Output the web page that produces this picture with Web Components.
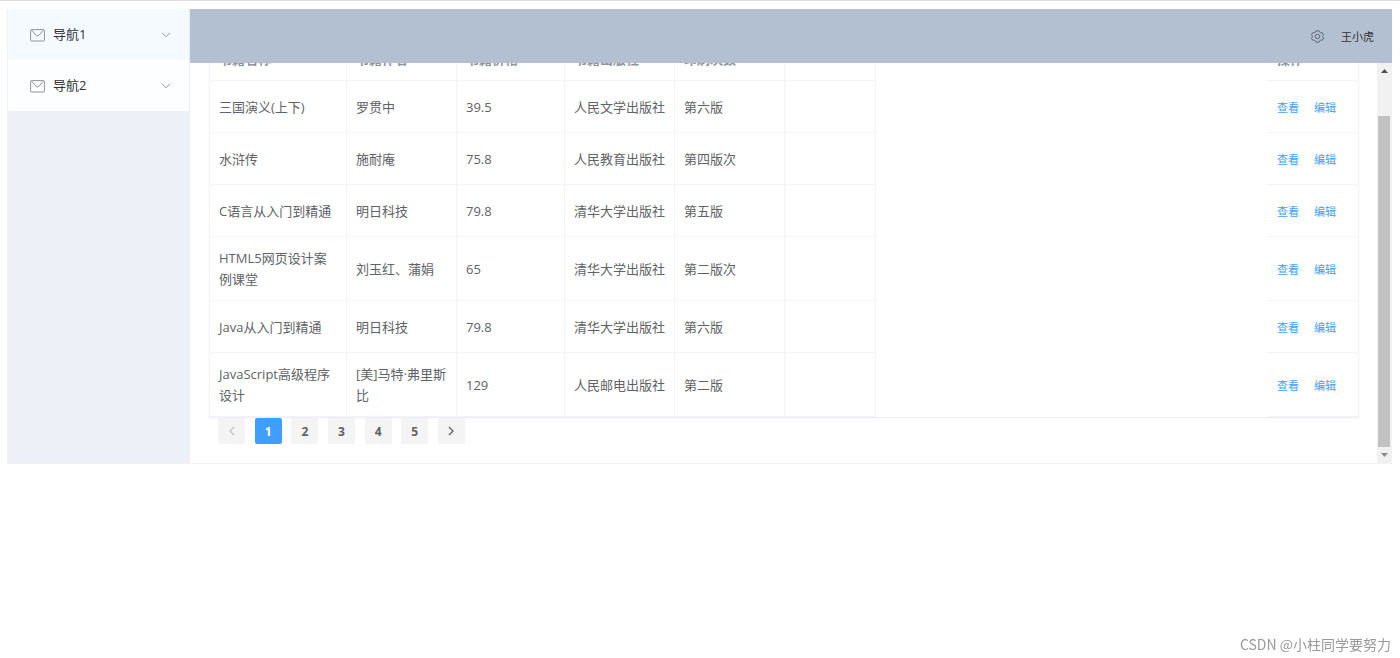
<!DOCTYPE html>
<html lang="zh-CN">
<head>
<meta charset="utf-8">
<title>书籍管理</title>
<style>
body{margin:0;background:#fff;border-top:1px solid #dedede;font-family:"Open Sans","Noto Sans CJK SC",sans-serif;font-size:13px;line-height:21px;color:#606266}
</style>
</head>
<body>
<app-shell>
  <side-menu slot="aside">
    <menu-entry active>导航1</menu-entry>
    <menu-entry>导航2</menu-entry>
  </side-menu>
  <top-bar slot="header">王小虎</top-bar>
  <scroll-pane>
    <book-table></book-table>
    <page-bar></page-bar>
  </scroll-pane>
</app-shell>
<author-mark>CSDN @小柱同学要努力</author-mark>
<script>
function define(name, html, setup) {
  const template = document.createElement('template');
  template.innerHTML = html;
  customElements.define(name, class extends HTMLElement {
    constructor() {
      super();
      this.attachShadow({mode: 'open'}).append(template.content.cloneNode(true));
      if (setup) setup(this.shadowRoot, this);
    }
  });
}

define('app-shell', `
<style>
:host{display:flex;margin:8px 8px 0 7px;border-bottom:1px solid #f2f2f2}
aside{flex:0 0 182px;background:#edf1f7;border-left:1px solid #eef1f5}
.body{flex:1;min-width:0;display:flex;flex-direction:column}
</style>
<aside><slot name="aside"></slot></aside>
<div class="body"><slot name="header"></slot><main><slot></slot></main></div>`);

define('side-menu', `
<style>
:host{display:block}
nav{display:flex;flex-direction:column;background:#fff;border-right:1px solid #e9ecf2}
</style>
<nav><slot></slot></nav>`);

define('menu-entry', `
<style>
:host{display:block}
button{display:flex;align-items:center;width:100%;height:51px;padding:0 18px 0 22px;border:0;background:#fdfeff;font:inherit;color:#303133;cursor:pointer}
:host([active]) button{background:#f5faff}
.mail{margin:2px 8px 0 0}
.label{flex:1;text-align:left}
svg{display:block;fill:none;stroke:#909399}
</style>
<button type="button" aria-expanded="false">
<svg class="mail" width="15" height="13" viewBox="0 0 15 13"><rect x=".6" y=".6" width="13.8" height="11.4" rx="1"/><path d="M1.6 1.2 6 6.2Q7.5 7.8 9 6.2L13.4 1.2"/></svg>
<span class="label"><slot></slot></span>
<svg width="10" height="6" viewBox="0 0 10 6"><path d="M1 .8 5 4.8 9 .8"/></svg>
</button>`);

define('top-bar', `
<style>
:host{display:block}
header{display:flex;align-items:center;justify-content:flex-end;gap:17px;height:54px;padding-right:18px;background:#b3c0d1;color:#333;font-size:11px}
button{padding:0;border:0;background:none;color:#5f6875;cursor:pointer}
svg{display:block;fill:none;stroke:currentColor}
</style>
<header>
<button type="button" aria-label="设置"><svg width="13" height="13" viewBox="0 0 13 13"><path d="M4.9.8h3.2l.6 1.5 1 .6 1.6-.2 1.2 2-1 1.8 1 1.8-1.2 2-1.6-.2-1 .6-.6 1.5H4.9l-.6-1.5-1-.6-1.6.2-1.2-2 1-1.8-1-1.8 1.2-2 1.6.2 1-.6z"/><circle cx="6.5" cy="6.5" r="2.2"/></svg></button>
<span><slot></slot></span>
</header>`);

define('scroll-pane', `
<style>
:host{display:flex;height:400px}
.view{flex:1;min-width:0;box-sizing:border-box;padding:18px 18px 18px 19px;overflow-y:auto;scrollbar-width:none}
.bar{flex:0 0 15px;display:flex;flex-direction:column;background:#f1f1f1}
.bar button{display:flex;justify-content:center;align-items:center;height:16px;padding:0;border:0;background:none;color:#505050}
.bar .down{color:#8c8c8c}
.track{flex:1;display:flex;flex-direction:column;justify-content:flex-end;padding:0 2px 0 1px}
.thumb{height:90%;background:#c1c1c1}
svg{display:block;fill:currentColor}
</style>
<div class="view"><slot></slot></div>
<div class="bar">
<button class="up" type="button" aria-label="向上"><svg width="7" height="4" viewBox="0 0 7 4"><path d="M0 4 3.5 0 7 4z"/></svg></button>
<div class="track"><div class="thumb"></div></div>
<button class="down" type="button" aria-label="向下"><svg width="7" height="4" viewBox="0 0 7 4"><path d="M0 0 3.5 4 7 0z"/></svg></button>
</div>`, root => {
  const view = root.querySelector('.view');
  root.querySelector('.up').onclick = () => view.scrollBy(0, -40);
  root.querySelector('.down').onclick = () => view.scrollBy(0, 40);
});

const books = [
  ['三国演义(上下)', '罗贯中', '39.5', '人民文学出版社', '第六版'],
  ['水浒传', '施耐庵', '75.8', '人民教育出版社', '第四版次'],
  ['C语言从入门到精通', '明日科技', '79.8', '清华大学出版社', '第五版'],
  ['HTML5网页设计案例课堂', '刘玉红、蒲娟', '65', '清华大学出版社', '第二版次'],
  ['Java从入门到精通', '明日科技', '79.8', '清华大学出版社', '第六版'],
  ['JavaScript高级程序设计', '[美]马特·弗里斯比', '129', '人民邮电出版社', '第二版']
];

define('book-table', `
<style>
:host{display:block}
table{width:100%;table-layout:fixed;border-collapse:separate;border-spacing:0;border:1px solid #f1f4f8;border-width:1px 1px 0 1px;box-shadow:0 1px 1px #eceef1}
th,td{box-sizing:border-box;height:52px;padding:11px 9px 10px;border:0 solid #f1f4f8;border-width:0 1px 1px 0;text-align:left;vertical-align:middle;word-break:break-all}
th{height:42px;padding:8px 9px;color:#909399;font-weight:700}
.space{border-width:0}
tr :last-child{border-right-width:0}
.name{width:137px}.col{width:110px}.price{width:108px}.side{width:91px}.ops{width:90px}
td div{display:flex;gap:15px}
td button{padding:0;border:0;background:none;font:inherit;font-size:11px;color:#409eff;white-space:nowrap;cursor:pointer}
</style>
<table>
<colgroup><col class="name"><col class="col"><col class="price"><col class="col"><col class="col"><col class="side"><col><col class="ops"></colgroup>
<thead><tr><th>书籍名称</th><th>书籍作者</th><th>书籍价格</th><th>书籍出版社</th><th>印刷次数</th><th></th><th class="space"></th><th>操作</th></tr></thead>
<tbody></tbody>
</table>`, root => {
  root.querySelector('tbody').innerHTML = books.map(book =>
    '<tr>' + book.map(text => '<td>' + text + '</td>').join('') +
    '<td></td><td class="space"></td><td><div><button type="button">查看</button><button type="button">编辑</button></div></td></tr>').join('');
});

define('page-bar', `
<style>
:host{display:block;padding:1px 9px}
nav{display:flex;justify-content:space-between;width:247px}
button{display:flex;align-items:center;justify-content:center;width:27px;height:26px;padding:0;border:0;border-radius:2px;background:#f4f4f5;color:#606266;font:inherit;font-size:12px;font-weight:700;cursor:pointer}
[aria-current]{background:#409eff;color:#fff}
:disabled{color:#c0c4cc}
svg{fill:none;stroke:currentColor;stroke-width:1.3}
</style>
<nav aria-label="分页">
<button type="button" disabled aria-label="上一页"><svg width="6" height="10" viewBox="0 0 6 10"><path d="M5 1 1 5 5 9"/></svg></button>
<button type="button" aria-current="page">1</button><button type="button">2</button><button type="button">3</button><button type="button">4</button><button type="button">5</button>
<button type="button" aria-label="下一页"><svg width="6" height="10" viewBox="0 0 6 10"><path d="M1 1 5 5 1 9"/></svg></button>
</nav>`);

define('author-mark', `
<style>
:host{display:block;position:fixed;right:9px;bottom:3px;font-family:"Noto Sans CJK SC",sans-serif;font-size:14px;color:#999}
</style>
<slot></slot>`);

// The list opens at its last rows.
const view = document.querySelector('scroll-pane').shadowRoot.querySelector('.view');
view.scrollTop = view.scrollHeight;
</script>
</body>
</html>
